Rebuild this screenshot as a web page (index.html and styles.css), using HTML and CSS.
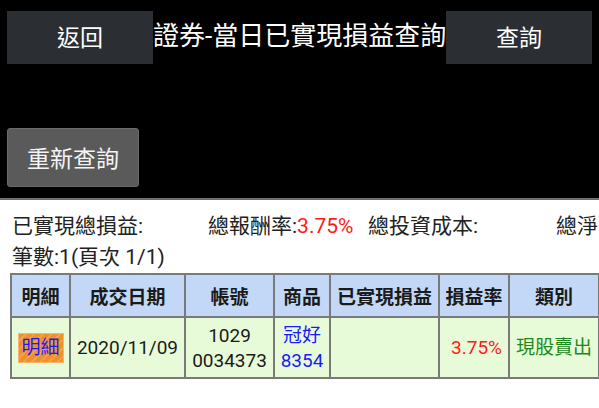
FILE: index.html
```html
<!DOCTYPE html>
<html lang="zh-Hant">
<head>
<meta charset="utf-8">
<title>證券-當日已實現損益查詢</title>
<link rel="stylesheet" href="styles.css">
</head>
<body>
<div class="top">
  <div class="bar">
    <button class="navbtn">返回</button>
    <div class="title">證券-當日已實現損益查詢</div>
    <button class="navbtn">查詢</button>
  </div>
  <button class="requery">重新查詢</button>
</div>
<div class="content">
  <div class="summary">
    <span class="s1">已實現總損益:</span>
    <span class="s2">總報酬率:<span class="red">3.75%</span></span>
    <span class="s3">總投資成本:</span>
    <span class="s4">總淨</span>
  </div>
  <div class="count">筆數:1(頁次 1/1)</div>
  <table class="grid">
    <colgroup>
      <col class="c1"><col class="c2"><col class="c3"><col class="c4"><col class="c5"><col class="c6"><col class="c7">
    </colgroup>
    <thead>
      <tr>
        <th>明細</th><th>成交日期</th><th>帳號</th><th>商品</th><th>已實現損益</th><th>損益率</th><th>類別</th>
      </tr>
    </thead>
    <tbody>
      <tr>
        <td><span class="detail">明細</span></td>
        <td>2020/11/09</td>
        <td>1029<br>0034373</td>
        <td class="blue">冠好<br>8354</td>
        <td></td>
        <td class="red right">3.75%</td>
        <td class="green">現股賣出</td>
      </tr>
    </tbody>
  </table>
</div>
</body>
</html>
```
FILE: styles.css
```css
html, body {
  margin: 0;
  padding: 0;
  background: #ffffff;
  font-family: Roboto, "Noto Sans CJK TC", "Noto Sans", sans-serif;
}
.top {
  background: #000000;
  height: 200px;
  border-bottom: 2px solid #6e6e6e;
  box-sizing: border-box;
  padding-top: 11px;
}
.bar {
  display: flex;
  align-items: stretch;
  padding: 0 7px;
  height: 53px;
}
.navbtn {
  width: 146px;
  height: 53px;
  background: #2b2f33;
  color: #ffffff;
  border: none;
  font-family: inherit;
  font-size: 23px;
  padding: 0 0 3px 0;
  flex: none;
}
.title {
  flex: 1;
  color: #ffffff;
  font-size: 26px;
  line-height: 50px;
  text-align: center;
  white-space: nowrap;
  overflow: hidden;
}
.requery {
  display: block;
  margin: 64px 0 0 7px;
  width: 132px;
  height: 59px;
  background: #5a5a5a;
  color: #f4f4f4;
  border: 1px solid #6a6a6a;
  border-radius: 3px;
  font-family: inherit;
  font-size: 23px;
  padding: 0 0 2px 0;
}
.content {
  padding-top: 11px;
}
.summary {
  display: flex;
  white-space: nowrap;
  overflow: hidden;
  font-size: 21px;
  line-height: 31px;
  color: #222222;
  padding-left: 12px;
}
.summary span { flex: none; }
.s1 { width: 196px; }
.s2 { width: 160px; }
.s3 { width: 188px; }
.count {
  font-size: 21px;
  line-height: 31px;
  color: #222222;
  padding-left: 12px;
}
.red { color: #ff1a1a; }
.grid {
  margin-left: 10px;
  width: 588px;
  border-collapse: collapse;
  table-layout: fixed;
  border: 2px solid #7a7a7a;
}
.c1 { width: 59px; }
.c2 { width: 115px; }
.c3 { width: 89px; }
.c4 { width: 56px; }
.c5 { width: 109px; }
.c6 { width: 70px; }
.c7 { width: 90px; }
.grid th, .grid td {
  border: 2px solid #7a7a7a;
  padding: 0 3px;
  text-align: center;
  white-space: nowrap;
}
.grid th {
  background: #c3d8f6;
  color: #1a1a1a;
  font-size: 19px;
  font-weight: bold;
  height: 41px;
}
.grid td {
  background: #e8fbd9;
  color: #1a1a1a;
  font-size: 19px;
  line-height: 25px;
  height: 59px;
}
.grid td.right { text-align: right; padding-right: 6px; }
.grid td.red { color: #ff1a1a; }
.grid td.blue { color: #1a1aff; }
.grid td.green { color: #1a8a1a; }
.detail {
  display: inline-block;
  width: 44px;
  height: 28px;
  line-height: 28px;
  color: #1a1aff;
  border: 1px solid #f7b46a;
  background: repeating-linear-gradient(135deg, #f0902a 0 4px, #f4a24a 4px 6px);
  font-size: 19px;
}
```
